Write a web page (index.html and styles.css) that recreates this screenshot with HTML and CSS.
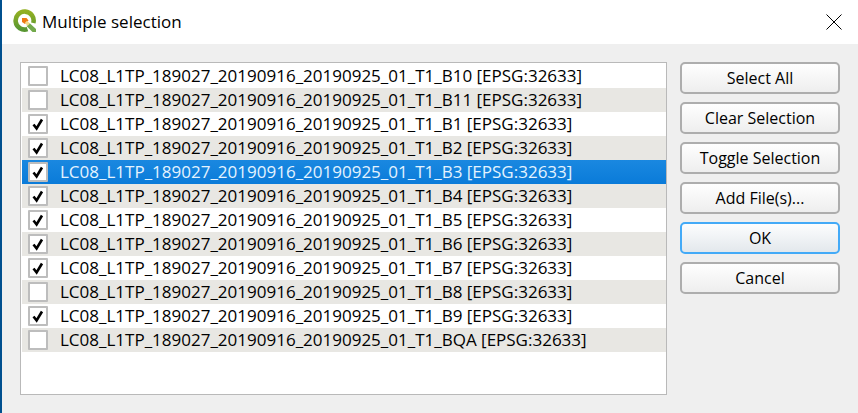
FILE: index.html
```html
<!DOCTYPE html>
<html lang="en">
<head>
<meta charset="utf-8">
<title>Multiple selection</title>
<link rel="stylesheet" href="styles.css">
</head>
<body>
<div class="dialog">
  <header class="titlebar">
    <svg class="logo" viewBox="0 0 24 24" aria-hidden="true">
      <defs>
        <linearGradient id="ring" x1="0" y1="0" x2="0" y2="1">
          <stop offset="0" stop-color="#93b023"/>
          <stop offset="1" stop-color="#589632"/>
        </linearGradient>
      </defs>
      <path d="M14.500 20.100A9 9 0 1 1 20.300 14" fill="none" stroke="url(#ring)" stroke-width="4.600"/>
      <path d="M13.500 17L16.500 14L23 20V23H19.500Z" fill="#72a94b"/>
      <path d="M9 9H13.500L15.500 11.500L12 15L9 13Z" fill="#ee7913"/>
      <path d="M12 13.700L14 11.700L17 14.500L14.500 17Z" fill="#f3d98a"/>
    </svg>
    <h1 class="title">Multiple selection</h1>
    <button class="close" type="button" aria-label="Close">
      <svg viewBox="0 0 16 16" aria-hidden="true"><path d="M0.500 0.500L15.500 15.500M15.500 0.500L0.500 15.500" stroke="#000" stroke-width="1"/></svg>
    </button>
  </header>
  <main class="content">
    <div class="list">
      <label class="row"><input type="checkbox"><span>LC08_L1TP_189027_20190916_20190925_01_T1_B10 [EPSG:32633]</span></label>
      <label class="row"><input type="checkbox"><span>LC08_L1TP_189027_20190916_20190925_01_T1_B11 [EPSG:32633]</span></label>
      <label class="row"><input type="checkbox" checked><span>LC08_L1TP_189027_20190916_20190925_01_T1_B1 [EPSG:32633]</span></label>
      <label class="row"><input type="checkbox" checked><span>LC08_L1TP_189027_20190916_20190925_01_T1_B2 [EPSG:32633]</span></label>
      <label class="row selected"><input type="checkbox" checked><span>LC08_L1TP_189027_20190916_20190925_01_T1_B3 [EPSG:32633]</span></label>
      <label class="row"><input type="checkbox" checked><span>LC08_L1TP_189027_20190916_20190925_01_T1_B4 [EPSG:32633]</span></label>
      <label class="row"><input type="checkbox" checked><span>LC08_L1TP_189027_20190916_20190925_01_T1_B5 [EPSG:32633]</span></label>
      <label class="row"><input type="checkbox" checked><span>LC08_L1TP_189027_20190916_20190925_01_T1_B6 [EPSG:32633]</span></label>
      <label class="row"><input type="checkbox" checked><span>LC08_L1TP_189027_20190916_20190925_01_T1_B7 [EPSG:32633]</span></label>
      <label class="row"><input type="checkbox"><span>LC08_L1TP_189027_20190916_20190925_01_T1_B8 [EPSG:32633]</span></label>
      <label class="row"><input type="checkbox" checked><span>LC08_L1TP_189027_20190916_20190925_01_T1_B9 [EPSG:32633]</span></label>
      <label class="row"><input type="checkbox"><span>LC08_L1TP_189027_20190916_20190925_01_T1_BQA [EPSG:32633]</span></label>
    </div>
    <div class="actions">
      <button class="btn" type="button">Select All</button>
      <button class="btn" type="button">Clear Selection</button>
      <button class="btn" type="button">Toggle Selection</button>
      <button class="btn" type="button">Add File(s)...</button>
      <button class="btn default" type="button">OK</button>
      <button class="btn" type="button">Cancel</button>
    </div>
  </main>
</div>
</body>
</html>
```

FILE: styles.css
```css
* { box-sizing: border-box; }

body {
  margin: 0;
  font-family: "Open Sans", "Noto Sans", sans-serif;
  font-size: 16px;
  color: #000;
  background: #efefef;
}

.dialog {
  display: flex;
  flex-direction: column;
  min-height: 100vh;
  border-left: 2px solid #00508f;
}

.titlebar {
  display: flex;
  align-items: center;
  height: 44px;
  padding: 0 16px 0 11px;
  background: #fff;
}

.logo {
  width: 24px;
  height: 24px;
  margin-bottom: 2px;
}

.title {
  flex: 1;
  margin: 0 0 0 5px;
  font-size: 17px;
  font-weight: 400;
  line-height: 24px;
}

.close {
  display: flex;
  padding: 0;
  border: 0;
  background: none;
}

.close svg {
  width: 16px;
  height: 16px;
}

.content {
  display: flex;
  flex: 1;
  gap: 13px;
  padding: 18px;
}

.list {
  flex: 1;
  padding: 1px 0;
  border: 1px solid #b9b9b9;
  background: #fff;
}

.row {
  display: flex;
  align-items: center;
  gap: 12px;
  height: 24px;
  padding-left: 6px;
  margin-left: 1px;
  font-size: 17px;
  line-height: 24px;
  white-space: nowrap;
}

.row:nth-child(even) { background: #e8e7e3; }

.row.selected {
  color: #e4f3ff;
  background: linear-gradient(#1a88e0, #0a7bd9);
}

.row input {
  appearance: none;
  width: 20px;
  height: 20px;
  margin: 0;
  border: 2px solid #bdbdbd;
  border-radius: 1px;
  background: #fff;
}

.row input:checked {
  background: #fff url("data:image/svg+xml,%3Csvg xmlns='http://www.w3.org/2000/svg' viewBox='0 0 16 16'%3E%3Cpath d='M3.500 8.500L6.600 12.500L12 3.500' fill='none' stroke='%23000' stroke-width='2.600'/%3E%3C/svg%3E") center / 16px 16px no-repeat;
}

.actions {
  display: flex;
  flex-direction: column;
  gap: 8px;
  width: 160px;
}

.btn {
  height: 32px;
  padding: 0;
  border: 2px solid #adadad;
  border-radius: 5px;
  font: inherit;
  line-height: 24px;
  color: #000;
  background: linear-gradient(#fefefe, #eeeeee);
}

.btn.default {
  border-color: #43aaf7;
  background: linear-gradient(#fcfdfe, #e3e8ec);
}
```
